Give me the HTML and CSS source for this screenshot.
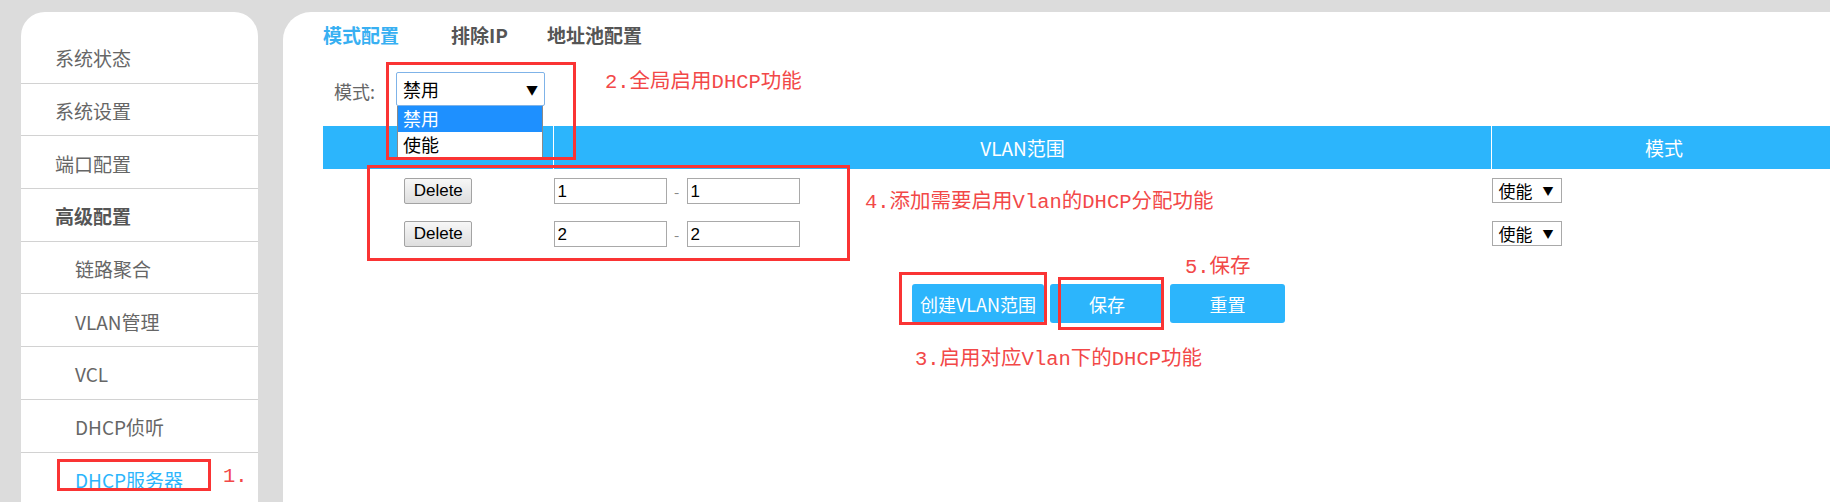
FILE: index.html
```html
<!DOCTYPE html>
<html lang="zh-CN">
    <head>
        <meta charset="utf-8">
        <title>DHCP服务器</title>
        <link rel="stylesheet" href="styles.css">
    </head>
    <body>
        <div class="page">
            <!-- left menu -->
            <div class="sidebar">
                <ul class="menu">
                    <li>系统状态</li>
                    <li>系统设置</li>
                    <li>端口配置</li>
                    <li class="group">高级配置</li>
                    <li class="sub">链路聚合</li>
                    <li class="sub">VLAN管理</li>
                    <li class="sub">VCL</li>
                    <li class="sub">DHCP侦听</li>
                    <li class="sub active">DHCP服务器</li>
                </ul>
            </div>

            <div class="panel">
                <div class="tabs">
                    <a class="tab tab-mode active">模式配置</a>
                    <a class="tab tab-exclude">排除IP</a>
                    <a class="tab tab-pool">地址池配置</a>
                </div>

                <div class="mode-row">
                    <label class="mode-label">模式:</label>
                    <div class="dropdown">
                        <div class="select select-big">
                            <span>禁用</span>
                            <span class="arrow">&#9660;</span>
                        </div>
                        <ul class="options">
                            <li class="selected">禁用</li>
                            <li>使能</li>
                        </ul>
                    </div>
                </div>

                <table class="vlan-table">
                    <tr>
                        <th class="col-del"></th>
                        <th class="col-range">VLAN范围</th>
                        <th class="col-mode">模式</th>
                    </tr>
                    <tr>
                        <td class="col-del"><button class="btn-delete">Delete</button></td>
                        <td class="col-range">
                            <input type="text" class="range-input" value="1"><span class="range-sep">-</span><input type="text" class="range-input" value="1">
                        </td>
                        <td class="col-mode">
                            <div class="select select-small"><span>使能</span><span class="arrow">&#9660;</span></div>
                        </td>
                    </tr>
                    <tr>
                        <td class="col-del"><button class="btn-delete">Delete</button></td>
                        <td class="col-range">
                            <input type="text" class="range-input" value="2"><span class="range-sep">-</span><input type="text" class="range-input" value="2">
                        </td>
                        <td class="col-mode">
                            <div class="select select-small"><span>使能</span><span class="arrow">&#9660;</span></div>
                        </td>
                    </tr>
                </table>

                <div class="actions">
                    <button class="btn btn-create">创建VLAN范围</button>
                    <button class="btn btn-save">保存</button>
                    <button class="btn btn-reset">重置</button>
                </div>
            </div>
        </div>

        <!-- red marks drawn over the screenshot -->
        <div class="mark mark-1"></div>
        <div class="mark mark-2"></div>
        <div class="mark mark-3"></div>
        <div class="mark mark-4"></div>
        <div class="mark mark-5"></div>
        <div class="note note-1">1.</div>
        <div class="note note-2">2.全局启用DHCP功能</div>
        <div class="note note-3">3.启用对应Vlan下的DHCP功能</div>
        <div class="note note-4">4.添加需要启用Vlan的DHCP分配功能</div>
        <div class="note note-5">5.保存</div>
    </body>
</html>
```

FILE: styles.css
```css
body {
    margin: 0;
    height: 502px;
    overflow: hidden;
    position: relative;
    background-color: #dcdcdc;
    font-family: "Noto Sans CJK SC", "Noto Sans", sans-serif;
}

.page {
    display: flex;
    gap: 25px;
    padding: 12px 0 0 21px;
}

/* sidebar */
.sidebar {
    width: 237px;
    height: 490px;
    flex-shrink: 0;
    background-color: #fff;
    border-radius: 24px 24px 0 0;
    padding-top: 19px;
    box-sizing: border-box;
    overflow: hidden;
}
.menu {
    list-style: none;
    margin: 0;
    padding: 0;
}
.menu li {
    height: 52.7px;
    display: flex;
    align-items: center;
    padding-left: 34px;
    padding-top: 2px;
    box-sizing: border-box;
    border-bottom: 1px solid #d2d2d2;
    font-size: 19px;
    color: #666;
}
.menu li.group {
    font-weight: bold;
    color: #555;
}
.menu li.sub {
    padding-left: 54px;
}
.menu li.active {
    color: #2cb5fc;
    border-bottom: none;
}

/* main panel */
.panel {
    flex: 1;
    margin-right: -12px;
    height: 490px;
    background-color: #fff;
    border-radius: 28px 0 0 0;
    padding-left: 40px;
}

.tabs {
    display: flex;
    padding-top: 10px;
    line-height: 26px;
}
.tab {
    font-size: 19px;
    font-weight: bold;
    color: #555;
}
.tab.active {
    color: #38b0f2;
}
.tab-exclude {margin-left: 52px;}
.tab-pool {margin-left: 39px;}

.mode-row {
    display: flex;
    align-items: center;
    margin-top: 24px;
    height: 34px;
}
.mode-label {
    font-size: 18px;
    color: #666;
    padding-left: 11px;
    margin-right: 21px;
    padding-top: 3px;
}

.dropdown {
    position: relative;
}
.select {
    display: flex;
    align-items: center;
    justify-content: space-between;
    box-sizing: border-box;
    background-color: #fff;
    color: #000;
}
.select-big {
    width: 149px;
    height: 34px;
    border: 1px solid #7fb3e8;
    border-radius: 2px;
    padding: 0 6px 0 6px;
    font-size: 18px;
}
.select-big .arrow {
    font-size: 12px;
}
.options {
    position: absolute;
    top: 34px;
    left: 1px;
    width: 146px;
    margin: 0;
    padding: 0;
    list-style: none;
    background-color: #fff;
    border: 1px solid #8a8a8a;
    border-top: none;
    box-sizing: border-box;
    z-index: 2;
}
.options li {
    height: 25.5px;
    line-height: 25px;
    padding-left: 5px;
    font-size: 18px;
    color: #000;
}
.options li.selected {
    background-color: #1e90ff;
    color: #fff;
}

/* vlan table */
.vlan-table {
    margin-top: 20px;
    border-collapse: collapse;
    table-layout: fixed;
    width: 1511px;
}
.vlan-table th {
    height: 43px;
    padding: 0;
    background-color: #2cb5fc;
    color: #fff;
    font-size: 19px;
    font-weight: normal;
    text-align: center;
}
.vlan-table th + th {
    border-left: 1px solid #fff;
}
.vlan-table td {
    height: 43px;
    padding: 0;
    vertical-align: middle;
}
.col-del {width: 230px; text-align: center;}
.col-range {width: 937px;}
.col-mode {width: 344px;}

.btn-delete {
    width: 68px;
    height: 26px;
    padding: 0;
    font-family: "Liberation Sans", Arial, sans-serif;
    font-size: 17px;
    color: #000;
    background: linear-gradient(#f7f7f7, #dedede);
    border: 1px solid #a3a3a3;
    border-radius: 2px;
    vertical-align: middle;
}
.range-input {
    width: 113px;
    height: 26px;
    box-sizing: border-box;
    border: 1px solid #a9a9a9;
    padding: 2px 3px 0 3px;
    font-family: "Liberation Sans", Arial, sans-serif;
    font-size: 17px;
    color: #000;
    vertical-align: middle;
}
.range-sep {
    display: inline-block;
    width: 20px;
    text-align: center;
    color: #888;
    font-size: 15px;
    vertical-align: middle;
}
.select-small {
    width: 70px;
    height: 25px;
    border: 1px solid #a9a9a9;
    padding: 0 7px 0 6px;
    font-size: 17px;
}
.select-small .arrow {
    font-size: 11px;
}

/* bottom buttons */
.actions {
    display: flex;
    gap: 6px;
    margin-top: 29px;
    margin-left: 589px;
}
.btn {
    height: 39px;
    padding: 0;
    border: none;
    border-radius: 3px;
    background-color: #2cb5fc;
    color: #fff;
    font-family: "Noto Sans CJK SC", "Noto Sans", sans-serif;
    font-size: 18px;
}
.btn-create {width: 132px;}
.btn-save {width: 114px;}
.btn-reset {width: 115px;}

/* annotations */
.mark {
    position: absolute;
    border: 3px solid #fa3434;
    box-sizing: border-box;
    z-index: 5;
}
.mark-1 {left: 57px; top: 459px; width: 154px; height: 32px;}
.mark-2 {left: 386px; top: 62px; width: 190px; height: 98px;}
.mark-3 {left: 899px; top: 272px; width: 148px; height: 53px;}
.mark-4 {left: 367px; top: 165px; width: 483px; height: 96px;}
.mark-5 {left: 1058px; top: 277px; width: 106px; height: 53px;}

.note {
    position: absolute;
    font-family: "Liberation Mono", "Noto Sans CJK SC", monospace;
    font-size: 20.5px;
    line-height: 24px;
    color: #f24848;
    white-space: nowrap;
    z-index: 5;
}
.note-1 {left: 223px; top: 465px;}
.note-2 {left: 605px; top: 71px;}
.note-3 {left: 915px; top: 348px;}
.note-4 {left: 865px; top: 191px;}
.note-5 {left: 1185px; top: 256px;}
```
